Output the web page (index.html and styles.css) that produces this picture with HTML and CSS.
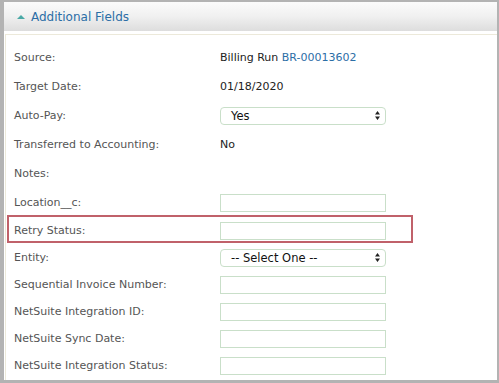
FILE: index.html
```html
<!DOCTYPE html>
<html lang="en">
<head>
  <meta charset="UTF-8">
  <title>Additional Fields</title>
  <link rel="stylesheet" href="styles.css">
</head>
<body>
  <div class="panel">
    <div class="panel-header">
      <span class="caret"></span>
      <span class="panel-title">Additional Fields</span>
    </div>
    <div class="panel-body">
      <div class="row tall">
        <span class="label">Source:</span>
        <span class="value">Billing Run <a href="#">BR-00013602</a></span>
      </div>
      <div class="row tall">
        <span class="label">Target Date:</span>
        <span class="value">01/18/2020</span>
      </div>
      <div class="row tall">
        <span class="label">Auto-Pay:</span>
        <div class="select">
          <span>Yes</span>
          <svg class="arrows" width="5" height="9" viewBox="0 0 5 9"><path d="M2.5 0 5 3.5H0zM0 5.5h5L2.5 9z" fill="#222"/></svg>
        </div>
      </div>
      <div class="row tall">
        <span class="label">Transferred to Accounting:</span>
        <span class="value">No</span>
      </div>
      <div class="row tall">
        <span class="label">Notes:</span>
        <span class="value"></span>
      </div>
      <div class="row tall">
        <span class="label">Location__c:</span>
        <input class="field" type="text">
      </div>
      <div class="row highlight">
        <span class="label">Retry Status:</span>
        <input class="field" type="text">
      </div>
      <div class="row">
        <span class="label">Entity:</span>
        <div class="select">
          <span>-- Select One --</span>
          <svg class="arrows" width="5" height="9" viewBox="0 0 5 9"><path d="M2.5 0 5 3.5H0zM0 5.5h5L2.5 9z" fill="#222"/></svg>
        </div>
      </div>
      <div class="row">
        <span class="label">Sequential Invoice Number:</span>
        <input class="field" type="text">
      </div>
      <div class="row">
        <span class="label">NetSuite Integration ID:</span>
        <input class="field" type="text">
      </div>
      <div class="row">
        <span class="label">NetSuite Sync Date:</span>
        <input class="field" type="text">
      </div>
      <div class="row">
        <span class="label">NetSuite Integration Status:</span>
        <input class="field" type="text">
      </div>
    </div>
  </div>
</body>
</html>
```

FILE: styles.css
```css
html, body {
  margin: 0;
  height: 100%;
}

body {
  font-family: "DejaVu Sans", Verdana, sans-serif;
  font-size: 11px;
  color: #222;
  background: #fff;
  overflow: hidden;
}

.panel {
  box-sizing: border-box;
  width: 499px;
  height: 383px;
  border-style: solid;
  border-color: #b3b3b3;
  border-width: 2px 2px 3px 4px;
  background: #fff;
  overflow: hidden;
}

.panel-header {
  height: 29px;
  display: flex;
  align-items: center;
  padding: 1px 0 0 13px;
  box-sizing: border-box;
  background: linear-gradient(to bottom, #fbfbfb 0%, #f0f0f0 50%, #dddddd 100%);
}

.caret {
  width: 0;
  height: 0;
  border-left: 4px solid transparent;
  border-right: 4px solid transparent;
  border-bottom: 4px solid #4aa9a6;
  margin-right: 6px;
  margin-top: -1px;
}

.panel-title {
  font-size: 12px;
  color: #2b6ea6;
}

.panel-body {
  margin: 3px 0 0 1px;
  border-top: 1px solid #ece9da;
  border-left: 1px solid #ece9da;
  padding-top: 8px;
  height: 400px;
}

.row {
  position: relative;
  display: grid;
  grid-template-columns: 206px 166px;
  align-items: center;
  height: 27px;
  padding-left: 8px;
}

.row.tall {
  height: 29px;
}

.label {
  color: #555;
}

.value a {
  color: #2b6ea6;
  text-decoration: none;
}

.field {
  box-sizing: border-box;
  width: 166px;
  height: 18px;
  margin: 0;
  border: 1px solid #c9dfc9;
  background: #fff;
}

.select {
  box-sizing: border-box;
  width: 166px;
  height: 18px;
  display: flex;
  align-items: center;
  justify-content: space-between;
  padding: 0 5px 0 10px;
  border: 1px solid #c9dfc9;
  border-radius: 4px;
  color: #111;
  font-size: 11.5px;
}

.arrows {
  display: block;
}

.row.highlight::after {
  content: "";
  position: absolute;
  left: 1px;
  top: -2px;
  width: 406px;
  height: 28px;
  box-sizing: border-box;
  border: 2px solid #c0616a;
}
```
